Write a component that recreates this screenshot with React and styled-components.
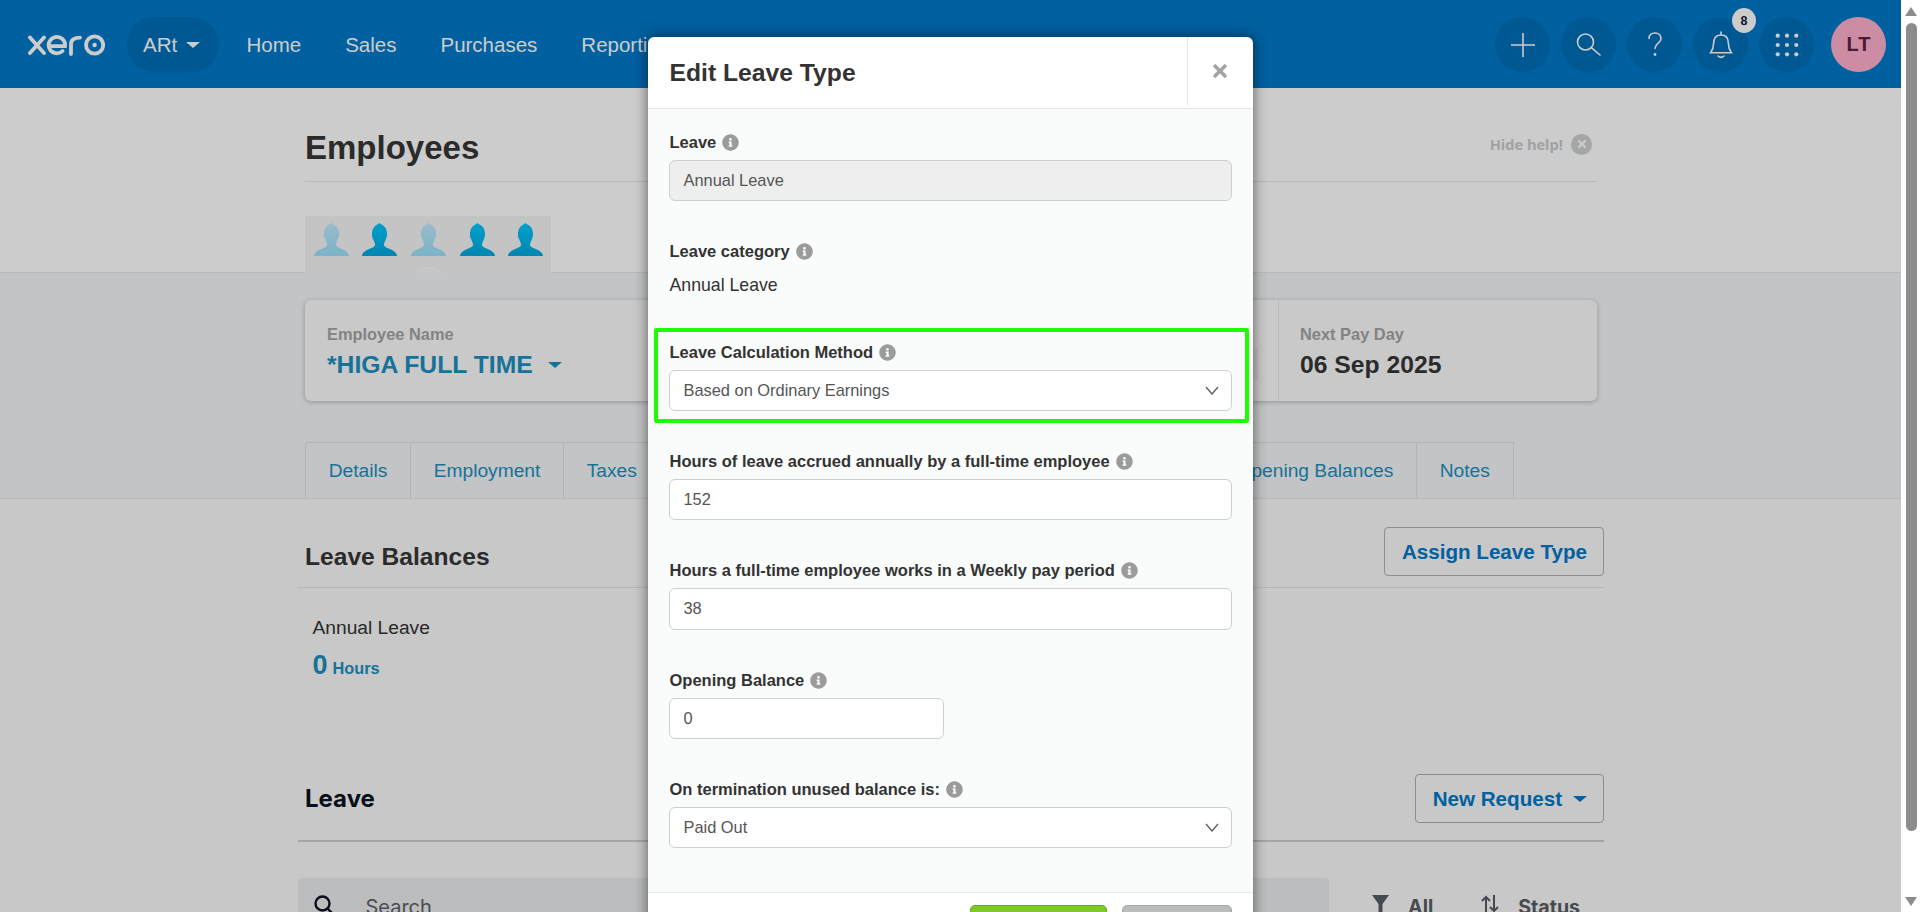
import React from "react";
import styled, { createGlobalStyle } from "styled-components";
import { FaInfoCircle, FaTimes } from "react-icons/fa";

const Global = createGlobalStyle`
  html, body { margin: 0; padding: 0; height: 912px; overflow: hidden; background: #fff; }
  body { font-family: "Liberation Sans", Arial, sans-serif; }
  * { box-sizing: border-box; }
`;

const Shell = styled.div`display: flex; width: 1920px; height: 912px; overflow: hidden;`;
const Viewport = styled.div`position: relative; flex: 1; min-width: 0; overflow: hidden; background: #fff;`;

/* ---------- top bar ---------- */
const TopBar = styled.header`
  display: flex; align-items: center; height: 88px; padding: 1px 15px 0 28px;
  background: #0078c8; color: #fff;
`;
const Org = styled.div`
  display: flex; align-items: center; gap: 9px; width: 92px; height: 55px; margin-left: 22px; padding-left: 16px;
  border-radius: 27px; background: rgba(0,0,0,.08); font-size: 20.6px;
`;
const Caret = styled.span`
  display: inline-block; width: 0; height: 0;
  border-left: ${p => p.$s || 7.5}px solid transparent; border-right: ${p => p.$s || 7.5}px solid transparent;
  border-top: ${p => (p.$s || 7.5) * 0.8}px solid ${p => p.$c || "#fff"};
`;
const Nav = styled.nav`display: flex; gap: 44px; margin-left: 27.5px; font-size: 20.5px;`;
const Tools = styled.div`display: flex; align-items: center; gap: 11px; margin-left: auto;`;
const RoundTool = styled.div`
  position: relative; display: flex; align-items: center; justify-content: center;
  width: 55px; height: 55px; border-radius: 50%; background: rgba(0,0,0,.08);
`;
const Badge = styled.span`
  position: absolute; top: -9px; right: -8px; width: 24px; height: 25px; border-radius: 50%;
  display: flex; align-items: center; justify-content: center;
  background: #fff; color: #10183c; font-size: 12.5px; font-weight: 700;
`;
const Avatar = styled.div`
  display: flex; align-items: center; justify-content: center; width: 55px; height: 55px; margin-left: 6px; padding-left: 1px;
  border-radius: 50%; background: #ffb0cc; color: #5e2142; font-size: 20px; font-weight: 700; letter-spacing: 1px;
`;

/* ---------- page title ---------- */
const TitleWrap = styled.div`margin-left: 305px; width: 1292px;`;
const TitleRow = styled.div`
  display: flex; justify-content: space-between; align-items: center;
  padding: 40px 5px 13px 0; border-bottom: 1px solid #e6e6e6;
`;
const PageTitle = styled.h1`margin: 0; font-size: 33px; line-height: 40px; font-weight: 700; color: #363636;`;
const HideHelp = styled.div`
  display: flex; align-items: center; gap: 8px; margin-bottom: 8px;
  font-family: "Open Sans", sans-serif; font-size: 14.6px; font-weight: 700; color: #c8cacd;
`;
const HelpClose = styled.span`
  display: flex; align-items: center; justify-content: center; width: 21px; height: 21px;
  border-radius: 50%; background: #cdd0d3; color: #fff;
`;
const Strip = styled.div`
  position: relative; display: flex; gap: 13.7px; width: 246px; height: 57px; margin: 34px 0 -1px;
  padding: 7px 0 0 8.5px; background: #f5f6f7; overflow: hidden;
  &::after {
    content: ""; position: absolute; left: 106px; top: 51px; width: 36px; height: 36px;
    border-radius: 50%; background: #f8f8f8; border-top: 1px solid #fff;
  }
`;

/* ---------- band with card and tabs ---------- */
const Band = styled.section`
  border-top: 1px solid #e8e8e8; border-bottom: 1px solid #e8e8e8; background: #f4f5f7;
  padding: 27px 0 0 305px; height: 227px;
`;
const Card = styled.div`
  display: flex; width: 1292px; height: 101px; border-radius: 6px; background: #fcfcfc;
  box-shadow: 0 1px 5px rgba(0,0,0,.25);
`;
const CardCell = styled.div`
  flex: ${p => (p.$grow ? 1 : "none")}; width: ${p => p.$w || "auto"};
  padding: 22.5px 0 0 ${p => p.$pad || 22}px; border-left: ${p => (p.$line ? "1px solid #e6e6e6" : "none")};
`;
const CardLabel = styled.div`font-size: 16.4px; line-height: 22px; font-weight: 700; color: #a4a4a4;`;
const CardValue = styled.div`
  display: flex; align-items: center; gap: 15px; margin-top: 6.5px;
  font-size: 24.7px; line-height: 28px; font-weight: 700; color: ${p => p.$c || "#363636"};
`;
const CardHidden = styled.div`
  height: 30px; margin: 26px 20px 0 0;
  background: rgba(0,0,0,.04);
`;
const TabRow = styled.div`display: flex; width: 1208.5px; height: 56px; margin-top: 41px;`;
const Tab = styled.div`
  flex: ${p => (p.$grow ? 1 : "none")}; padding: 0 22.7px; display: flex; align-items: center;
  border: 1px solid #e2e2e2; border-bottom: none; border-left-width: ${p => (p.$first ? 1 : 0)}px;
  border-radius: ${p => (p.$first ? "4px 0 0 0" : "0")};
  font-size: 19.2px; color: #1b8fc0;
`;

/* ---------- content sections ---------- */
const Lower = styled.div`padding-left: 298px; height: 500px; background: #fafafa;`;
const Section = styled.section`width: 1306px;`;
const SectionHead = styled.div`
  display: flex; justify-content: space-between; align-items: center;
  padding: ${p => p.$top || 28}px 0 ${p => p.$bottom || 11}px 7px;
  border-bottom: ${p => p.$thick ? "2px solid #cfcfcf" : "1px solid #e4e4e4"};
`;
const SectionTitle = styled.h2`
  margin: 10px 0 0; font-size: 24.6px; line-height: 30px; font-weight: 700; color: #363636;
`;
const PlainTitle = styled.h2`
  margin: 1px 0 0; font-family: Inter, sans-serif; font-size: 24px; line-height: 30px; font-weight: 700; color: #0a1222;
`;
const OutlineButton = styled.div`
  display: flex; align-items: center; gap: 11px; height: 49px; padding: 0 16px 0 17px;
  border: 1px solid #afb1b5; border-radius: 4px; font-size: 20.6px; font-weight: 700; color: #0078c8;
`;
const Balance = styled.div`padding: 28px 0 0 14.5px;`;
const BalanceName = styled.div`font-size: 19.2px; line-height: 24px; color: #333;`;
const BalanceValue = styled.div`
  display: flex; align-items: baseline; gap: 5px; margin-top: 10px; font-weight: 700; color: #1b8fc0;
  font-size: 16.3px;
`;
const BigNumber = styled.span`font-size: 27px; line-height: 30px;`;
const SearchRow = styled.div`display: flex; margin-top: 36px;`;
const SearchBar = styled.div`
  display: flex; align-items: flex-start; width: 1031px; height: 60px; padding: 17px 0 0 16px;
  border-radius: 4px; background: #ecedef; color: #0a1222;
`;
const SearchText = styled.span`
  margin-left: 31.5px; font-family: Inter, sans-serif; font-size: 20px; line-height: 24px; color: #5c6068;
`;
const Filter = styled.div`
  display: flex; align-items: flex-start; gap: ${p => p.$gap}px; margin-left: ${p => p.$left}px; padding-top: 17px;
  font-family: Inter, sans-serif; font-size: 19.6px; line-height: 24px; font-weight: 700; color: #585d64;
`;

/* ---------- dialog ---------- */
const Overlay = styled.div`
  position: absolute; inset: 0; display: flex; justify-content: center; align-items: flex-start;
  padding-top: 37px; background: rgba(0,0,0,.2);
`;
const Dialog = styled.div`
  width: 605px; flex: none; border-radius: 6px; background: #fff; box-shadow: 0 0 14px rgba(0,0,0,.55);
`;
const DialogHead = styled.div`
  display: flex; justify-content: space-between; height: 72px; padding-left: 21.5px;
  border-bottom: 1px solid #e4e6e6;
`;
const DialogTitle = styled.h3`
  margin: 0; align-self: center; font-size: 24.7px; line-height: 30px; font-weight: 700; color: #333;
`;
const CloseCell = styled.div`
  display: flex; align-items: center; justify-content: center; width: 66.5px; height: 69px;
  padding: 0 1px 2px 0; border-left: 1px solid #e6e6e6; color: #a5a5a5;
`;
const DialogBody = styled.div`height: 783px; padding: 22.5px 21.5px 0 21px; background: #fafbfb;`;
const Field = styled.div`
  position: relative; margin-bottom: ${p => p.$mb ?? 39.6}px;
`;
const Ring = styled.div`
  position: absolute; inset: -13px -17px -12px -15px; border: 4.5px solid #1dff00; border-radius: 2px;
  pointer-events: none;
`;
const Label = styled.label`
  display: flex; align-items: center; gap: 6px; height: 22px; padding-left: .5px;
  font-size: 16.5px; font-weight: 700; color: #333;
`;
const InfoIcon = styled(FaInfoCircle)`color: #9b9b9b; flex: none;`;
const Control = styled.div`
  display: flex; align-items: center; justify-content: space-between; margin-top: 6.5px;
  width: ${p => p.$w || "100%"}; height: 41.2px; padding: 0 12px 0 13.5px;
  border: 1px solid #cfcfcf; border-radius: 6px;
  background: ${p => (p.$off ? "#eee" : "#fff")}; font-size: 16.4px; color: #555;
`;
const StaticValue = styled.div`margin-top: 11px; height: 22px; padding-left: .5px; font-size: 17.7px; line-height: 22px; color: #333;`;
const DialogFoot = styled.div`
  display: flex; justify-content: flex-end; gap: 15px; height: 60px; padding: 12px 21.5px 0 0;
  border-top: 1px solid #e9ebeb; background: #fff;
`;
const FootButton = styled.div`
  width: ${p => p.$w}px; height: 41px;
  border: 1px solid ${p => (p.$go ? "#5ea91f" : "#a6a8ac")}; border-radius: 5px;
  background: ${p => (p.$go ? "#7fc924" : "#b9bbbf")};
`;

/* ---------- scrollbar ---------- */
const Scroll = styled.div`
  flex: none; width: 19px; height: 912px; padding: 7px 3px 0 4px; display: flex; flex-direction: column; align-items: center;
  background: #fff;
`;
const ArrowUp = styled.div`
  width: 0; height: 0; border-left: 6px solid transparent; border-right: 6px solid transparent; border-bottom: 9px solid #8c8c8c;
`;
const Thumb = styled.div`width: 11px; height: 808px; margin-top: 7px; border-radius: 6px; background: #8c8c8c;`;
const ArrowDown = styled.div`
  width: 0; height: 0; margin-top: 66px; border-left: 6px solid transparent; border-right: 6px solid transparent; border-top: 9px solid #8c8c8c;
`;

/* ---------- drawings ---------- */
const Logo = () => (
  <svg width="77" height="22" viewBox="0 0 77 22" fill="none" stroke="#fff" strokeWidth="3.8" strokeLinecap="round" style={{ flex: "none" }}>
    <path d="M2 3.5 16 19M16 3.5 2 19" />
    <path d="M21.5 12.2H37A8.2 8.2 0 1 0 34.600 17" />
    <path d="M43 20V10Q43 3.600 52 3.600" />
    <circle cx="66.600" cy="11" r="8.600" />
    <circle cx="66.600" cy="11" r="2.200" fill="#fff" stroke="none" />
  </svg>
);
const Line = { fill: "none", stroke: "#fff", strokeWidth: 1.6, strokeLinecap: "round" };
const PlusIcon = () => <svg width="24" height="24" viewBox="0 0 24 24" {...Line}><path d="M12 0V24M0 12H24" /></svg>;
const SearchIcon = () => <svg width="25" height="25" viewBox="0 0 25 25" {...Line}><circle cx="9.500" cy="10" r="8" /><path d="M15.400 15.600 24 23" /></svg>;
const HelpIcon = () => (
  <svg width="16" height="25" viewBox="0 0 16 25" {...Line}>
    <path d="M2 6.500C2 3 4.500 1 8 1s6 2.400 6 5.500c0 4.600-6 4.600-6 10" /><circle cx="8" cy="22.500" r="1.400" fill="#fff" stroke="none" />
  </svg>
);
const BellIcon = () => (
  <svg width="24" height="28" viewBox="0 0 24 28" {...Line}>
    <path d="M12 1v3M12 4C6.500 4 4.600 8 4.600 12.500c0 4.600-1.400 7-3 9.300h20.800c-1.600-2.300-3-4.700-3-9.300C19.400 8 17.500 4 12 4Z" /><path d="M9 25q3 2.600 6 0" />
  </svg>
);
const DotsIcon = () => (
  <svg width="24" height="24" viewBox="0 0 24 24" fill="#fff">
    {[2.7, 12, 21.3].flatMap(y => [2.7, 12, 21.3].map(x => <circle key={`${x}-${y}`} cx={x} cy={y} r="2.100" />))}
  </svg>
);
const Person = ({ id, top, bottom }) => (
  <svg width="35" height="33" viewBox="0 0 35 33" style={{ flex: "none" }}>
    <defs>
      <linearGradient id={id} x1="0" y1="0" x2="0" y2="1"><stop offset="0" stopColor={top} /><stop offset="1" stopColor={bottom} /></linearGradient>
    </defs>
    <path fill={`url(#${id})`} d="M17.500 0C20 2 24.500 3 25 10 25.300 13 24.500 15 23.500 17 22.500 19 22 20.500 22 22 22 24 26 25 29 26.500 32 28 35 30 35 33L0 33C0 30 3 28 6 26.500 9 25 13 24 13 22 13 20.500 12.500 19 11.500 17 10.500 15 9.700 13 10 10 10.500 3 15 2 17.500 0Z" />
  </svg>
);
const Chevron = () => <svg width="14" height="9" viewBox="0 0 14 9" fill="none" stroke="#666" strokeWidth="1.5"><path d="M1 1 7 8 13 1" /></svg>;
const Funnel = () => <svg width="17" height="18" viewBox="0 0 17 18" fill="#585d64"><path d="M0 0H17L10.500 9V18H6.500V9Z" /></svg>;
const SortIcon = () => (
  <svg width="18" height="18" viewBox="0 0 18 18" fill="none" stroke="#585d64" strokeWidth="2"><path d="M5 18V2M1 6 5 2 9 6M13 0V16M9 12 13 16 17 12" /></svg>
);
const DarkSearch = () => (
  <svg width="20" height="20" viewBox="0 0 20 20" fill="none" stroke="#0a1222" strokeWidth="2.400"><circle cx="8.500" cy="8.500" r="7" /><path d="M13.500 13.500 19 19" /></svg>
);

const Info = () => <InfoIcon size={17} />;
const people = [0, 1, 0, 1, 1];

export default function App() {
  return (
    <Shell>
      <Global />
      <Viewport>
        <TopBar>
          <Logo />
          <Org>ARt <Caret /></Org>
          <Nav><span>Home</span><span>Sales</span><span>Purchases</span><span>Reporting</span></Nav>
          <Tools>
            <RoundTool><PlusIcon /></RoundTool>
            <RoundTool><SearchIcon /></RoundTool>
            <RoundTool><HelpIcon /></RoundTool>
            <RoundTool><BellIcon /><Badge>8</Badge></RoundTool>
            <RoundTool><DotsIcon /></RoundTool>
            <Avatar>LT</Avatar>
          </Tools>
        </TopBar>

        <TitleWrap>
          <TitleRow>
            <PageTitle>Employees</PageTitle>
            <HideHelp>Hide help! <HelpClose><FaTimes size={12} /></HelpClose></HideHelp>
          </TitleRow>
          <Strip>
            {people.map((on, i) => (
              <Person key={i} id={`p${i}`} top={on ? "#00c8ff" : "#beebfc"} bottom={on ? "#00a8de" : "#9ce0fa"} />
            ))}
          </Strip>
        </TitleWrap>

        <Band>
          <Card>
            <CardCell $w="350px">
              <CardLabel>Employee Name</CardLabel>
              <CardValue $c="#1b8fc0">*HIGA FULL TIME <Caret $c="#1b8fc0" /></CardValue>
            </CardCell>
            <CardCell $grow $line><CardHidden /></CardCell>
            <CardCell $w="319px" $line $pad={21}>
              <CardLabel>Next Pay Day</CardLabel>
              <CardValue>06 Sep 2025</CardValue>
            </CardCell>
          </Card>
          <TabRow>
            <Tab $first>Details</Tab>
            <Tab>Employment</Tab>
            <Tab>Taxes</Tab>
            <Tab $grow />
            <Tab>Opening Balances</Tab>
            <Tab>Notes</Tab>
          </TabRow>
        </Band>

        <Lower>
          <Section>
            <SectionHead>
              <SectionTitle>Leave Balances</SectionTitle>
              <OutlineButton>Assign Leave Type</OutlineButton>
            </SectionHead>
            <Balance>
              <BalanceName>Annual Leave</BalanceName>
              <BalanceValue><BigNumber>0</BigNumber> Hours</BalanceValue>
            </Balance>
            <SectionHead $top={94} $bottom={17} $thick>
              <PlainTitle>Leave</PlainTitle>
              <OutlineButton>New Request <Caret $c="#0078c8" /></OutlineButton>
            </SectionHead>
            <SearchRow>
              <SearchBar><DarkSearch /><SearchText>Search</SearchText></SearchBar>
              <Filter $left={43} $gap={19}><Funnel />All</Filter>
              <Filter $left={48} $gap={19}><SortIcon />Status</Filter>
            </SearchRow>
          </Section>
        </Lower>

        <Overlay>
          <Dialog>
            <DialogHead>
              <DialogTitle>Edit Leave Type</DialogTitle>
              <CloseCell><FaTimes size={20} /></CloseCell>
            </DialogHead>
            <DialogBody>
              <Field>
                <Label>Leave <Info /></Label>
                <Control $off>Annual Leave</Control>
              </Field>
              <Field $mb={45.5}>
                <Label>Leave category <Info /></Label>
                <StaticValue>Annual Leave</StaticValue>
              </Field>
              <Field>
                <Label>Leave Calculation Method <Info /></Label>
                <Control>Based on Ordinary Earnings <Chevron /></Control>
                <Ring />
              </Field>
              <Field>
                <Label>Hours of leave accrued annually by a full-time employee <Info /></Label>
                <Control>152</Control>
              </Field>
              <Field>
                <Label>Hours a full-time employee works in a Weekly pay period <Info /></Label>
                <Control>38</Control>
              </Field>
              <Field>
                <Label>Opening Balance <Info /></Label>
                <Control $w="275px">0</Control>
              </Field>
              <Field>
                <Label>On termination unused balance is: <Info /></Label>
                <Control>Paid Out <Chevron /></Control>
              </Field>
            </DialogBody>
            <DialogFoot>
              <FootButton $go $w={137} />
              <FootButton $w={110} />
            </DialogFoot>
          </Dialog>
        </Overlay>
      </Viewport>
      <Scroll>
        <ArrowUp />
        <Thumb />
        <ArrowDown />
      </Scroll>
    </Shell>
  );
}
